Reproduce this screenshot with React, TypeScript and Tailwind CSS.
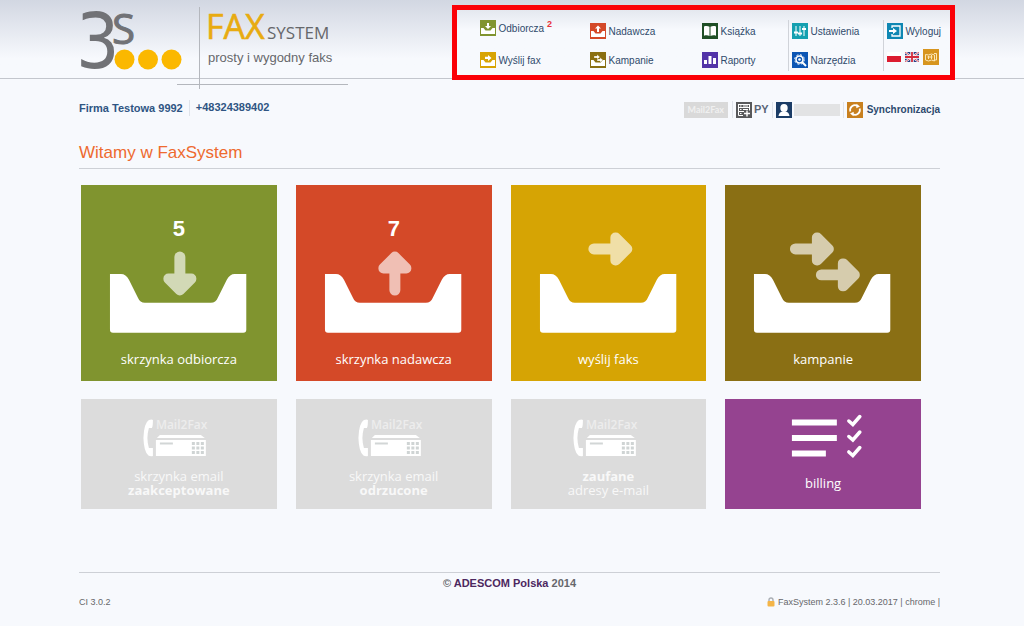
import type { ReactNode } from 'react';

type IconProps = { color: string; children: ReactNode };

// 16x16 coloured square with a white glyph on it
const Icon = ({ color, children }: IconProps) => (
  <svg viewBox="0 0 16 16" className="size-4 shrink-0" fill="#fff" aria-hidden="true">
    <rect width="16" height="16" fill={color} />
    {children}
  </svg>
);

const SMALL_TRAY = 'M1 8h2.5l2 2.5h5l2-2.5H15v6H1z';

const icons = {
  inbox: (
    <Icon color="#80942f">
      <path d={SMALL_TRAY} />
      <path d="M7 3h2v3h2L8 9 5 6h2z" />
    </Icon>
  ),
  outbox: (
    <Icon color="#d44928">
      <path d={SMALL_TRAY} />
      <path d="M8 2.500l3 3H9V9H7V5.500H5z" />
    </Icon>
  ),
  send: (
    <Icon color="#d8a403">
      <path d={SMALL_TRAY} />
      <path d="M5 4.800h3V3l3.500 3L8 9V7H5z" />
    </Icon>
  ),
  campaigns: (
    <Icon color="#8a6f12">
      <path d={SMALL_TRAY} />
      <path d="M4 4h3V2.500L10 5 7 7.500V6H4zM7 7h3V5.500L13 8l-3 2.500V9H7z" stroke="#8a6f12" strokeWidth=".3" />
    </Icon>
  ),
  book: (
    <Icon color="#1f4f26">
      <path d="M2 3.500c2-.8 4-.6 5.500.3v9.200c-1.500-.9-3.500-1-5.500-.3zM14 3.500c-2-.8-4-.6-5.500.3v9.200c1.500-.9 3.500-1 5.500-.3z" />
    </Icon>
  ),
  reports: (
    <Icon color="#5233a8">
      <rect x="2" y="8" width="3" height="4" />
      <rect x="6.500" y="4" width="3" height="8" />
      <rect x="11" y="6" width="3" height="6" />
    </Icon>
  ),
  settings: (
    <Icon color="#15a0b0">
      <path d="M3.500 3h1v10h-1zM7.500 3h1v10h-1zM11.500 3h1v10h-1z" />
      <path d="M2 8.500h4v2H2zM6 9.500h4v2H6zM10 5h4v2h-4z" />
    </Icon>
  ),
  tools: (
    <Icon color="#0c55b4">
      <g fill="none" stroke="#fff">
        <circle cx="7.500" cy="7.500" r="3.500" strokeWidth="1.600" />
        <circle cx="7.500" cy="7.500" r="4.800" strokeWidth="1" strokeDasharray="2 1.770" />
        <path d="M10 10l4 4" strokeWidth="2" />
      </g>
      <circle cx="7.500" cy="7.500" r="1.300" />
    </Icon>
  ),
  logout: (
    <Icon color="#0f87b3">
      <path d="M5 5V3h8v10H5v-2" fill="none" stroke="#fff" strokeWidth="1.300" />
      <path d="M2 7h4V5l4 3-4 3V9H2z" />
    </Icon>
  ),
  language: (
    <Icon color="#d7951f">
      <path
        d="M2.500 5.500l3 .5 3-1 3 1V12l-3-1-3 1-3-1zM11 4.500h2.500v6.500H11M5.500 7v3M8.500 6v4M4.500 8h5"
        fill="none"
        stroke="#fbe6b5"
      />
    </Icon>
  ),
  server: (
    <Icon color="#58595b">
      <g fill="none" stroke="#fff">
        <rect x="2.500" y="2.500" width="11" height="3" />
        <path d="M8 9.500H2.500v-4h11v3M7 13.500H2.500v-4M4 4h1.500M4 7.500h1.500M4 11.500h1.500M7 4h5M7 7.500h5" />
        <path d="M8 11.500h6M11 8.500v6" strokeWidth="1.400" />
      </g>
    </Icon>
  ),
  user: (
    <Icon color="#1c3d66">
      <ellipse cx="8" cy="6" rx="3.700" ry="4" />
      <path d="M2.500 14c.3-2.700 2-4 4-4.400h3c2 .4 3.700 1.700 4 4.400z" />
    </Icon>
  ),
  sync: (
    <Icon color="#c8801f">
      <g fill="none" stroke="#fff" strokeWidth="1.700">
        <path d="M3.300 9.500A4.900 4.900 0 0 1 10.500 3.900" />
        <path d="M12.700 6.500A4.900 4.900 0 0 1 5.500 12.100" />
      </g>
      <path d="M9.500 1.800l3.500 2.700-3.700 1.800zM6.500 14.200L3 11.500l3.700-1.800z" />
    </Icon>
  ),
};

const NavLink = ({ icon, label, count }: { icon: ReactNode; label: string; count?: number }) => (
  <a href="#" className="flex h-4 items-center gap-[3px] whitespace-nowrap">
    {icon}
    <span>{label}</span>
    {count !== undefined && <sup className="top-[-4px] text-[9px] font-bold text-[#e8323a]">{count}</sup>}
  </a>
);

const Logo = () => (
  <svg
    viewBox="0 0 270 90"
    className="-mb-3 h-[90px] w-[270px] shrink-0 overflow-visible"
    role="img"
    aria-label="3S FaxSystem"
  >
    <text x="-3" y="68" fontSize="76" fontFamily="'DejaVu Sans Condensed', 'DejaVu Sans', sans-serif" fill="#717276">
      3
    </text>
    <g fontFamily="'Open Sans', 'Noto Sans', sans-serif">
      <text x="33" y="44" fontSize="42" fill="#717276" stroke="#717276">S</text>
      <text x="127" y="39" fontSize="34" fill="#e8ab10" stroke="#e8ab10" strokeWidth=".6">FAX</text>
      <text x="188" y="39" fontSize="17" fill="#66676b">SYSTEM</text>
    </g>
    <g fill="#fbb800">
      <circle cx="45.500" cy="59.500" r="10" />
      <circle cx="69" cy="59.500" r="10" />
      <circle cx="92.500" cy="59.500" r="10" />
    </g>
    <text x="129" y="62" fontSize="13" fontFamily="'Liberation Sans', Arial, sans-serif" fill="#66676b">
      prosty i wygodny faks
    </text>
    <path d="M120.500 7v82M98 84.500h171" stroke="#b4b7bd" fill="none" />
  </svg>
);

const PolishFlag = () => (
  <svg viewBox="0 0 14 10" className="h-[10px] w-[14px]">
    <rect width="14" height="10" fill="#fff" />
    <rect y="4" width="14" height="6" fill="#dc1c30" />
  </svg>
);

const BritishFlag = () => (
  <svg viewBox="0 0 14 10" className="h-[10px] w-[14px]">
    <rect width="14" height="10" fill="#2b3f86" />
    <path d="M0 0l14 10M14 0L0 10" stroke="#fff" strokeWidth="2" />
    <path d="M0 0l14 10M14 0L0 10" stroke="#d22c3c" strokeWidth=".8" />
    <path d="M7 0v10M0 5h14" stroke="#fff" strokeWidth="3.400" />
    <path d="M7 0v10M0 5h14" stroke="#d22c3c" strokeWidth="1.800" />
  </svg>
);

// Points right, 44x33
const Arrow = ({ transform }: { transform: string }) => (
  <g transform={transform} fill="#fff" opacity=".65">
    <rect y="11" width="28" height="11" rx="5.500" />
    <path d="M27 5v23h.5L39 16.500 27.500 5z" stroke="#fff" strokeWidth="10" strokeLinejoin="round" />
  </g>
);

type TrayTileProps = { color: string; label: string; count?: number; arrows: string[] };

const TrayTile = ({ color, label, count, arrows }: TrayTileProps) => (
  <a href="#" className={`flex flex-col pb-3 ${color}`}>
    <svg viewBox="0 0 196 164" className="w-full" aria-hidden="true">
      {count !== undefined && (
        <text
          x="98"
          y="51"
          textAnchor="middle"
          fontSize="22"
          fontWeight="bold"
          fontFamily="'Liberation Sans', Arial, sans-serif"
          fill="#fff"
        >
          {count}
        </text>
      )}
      {arrows.map((transform) => (
        <Arrow key={transform} transform={transform} />
      ))}
      <path
        d="M29 89h11q5 0 8 6l9 18q2 5 7 5h66q5 0 7-5l9-18q3-6 8-6h11.500v56q0 3-3 3H32q-3 0-3-3z"
        fill="#fff"
      />
    </svg>
    <span className="text-center text-[13px]/5">{label}</span>
  </a>
);

const FaxTile = ({ children }: { children: ReactNode }) => (
  <a href="#" className="flex h-[110px] flex-col bg-[#dcdcdc] text-center text-[13px]/[14px] text-[#f8f8f8]">
    <svg viewBox="0 0 196 70" className="h-[70px] w-full" aria-hidden="true">
      <path d="M72 21q-1-1-4 0-5 3-5.500 18 .5 14 5 17.500 2 1 4.500.5v-8h-4q-3-10 0-20h3q1-1 1-8z" fill="#fff" />
      <text x="75" y="30" fontSize="12" fontWeight="600" fontFamily="'Open Sans', sans-serif" fill="#ededed">
        Mail2Fax
      </text>
      <path d="M79 36h41l4 3H76zM75 41h50v16H75z" fill="#fff" />
      <path d="M79 44.500h13" stroke="#d2d6d6" strokeWidth="2" />
      <path
        d="M111 44.500h12M111 49h12M111 53.500h12"
        stroke="#cfd4d4"
        strokeWidth="3"
        strokeDasharray="3 1.500"
      />
    </svg>
    {children}
  </a>
);

const BillingTile = () => (
  <a href="#" className="flex h-[110px] flex-col gap-1 bg-[#954390] text-center text-[13px]/5">
    <svg viewBox="0 0 196 70" className="h-[70px] w-full" aria-hidden="true">
      <path d="M67 20.500h45v6H67zM67 36h45v6H67zM67 51.500h34v6H67z" fill="#fff" />
      <path
        d="M124 22l4 3.500 7-8M124 37.500l4 3.500 7-8M124 53l4 3.500 7-8"
        fill="none"
        stroke="#fff"
        strokeWidth="3.500"
        strokeLinecap="round"
      />
    </svg>
    billing
  </a>
);

export default function App() {
  return (
    <div className="min-h-screen bg-[#f7f9fd] font-['Liberation_Sans',Arial,sans-serif] text-[#66676b]">
      <header className="flex h-[79px] justify-between border-b border-[#c3c6cd] bg-linear-to-b from-[#d2d7e2] to-[#f7f9fd] to-75% pr-[69px] pl-[79px]">
        <Logo />
        <nav className="mt-[5px] flex h-[75px] border-5 border-[#fb0007] bg-linear-to-b from-[#e4e8ef] to-[#f7f9fd] to-30% pt-[10px] pr-[9px] pl-[23px] text-[10px] text-[#2f4a6b]">
          <div className="flex w-[110px] flex-col gap-4">
            <NavLink icon={icons.inbox} label="Odbiorcza" count={2} />
            <NavLink icon={icons.send} label="Wyślij fax" />
          </div>
          <div className="flex w-28 flex-col gap-[13px] pt-[3px]">
            <NavLink icon={icons.outbox} label="Nadawcza" />
            <NavLink icon={icons.campaigns} label="Kampanie" />
          </div>
          <div className="flex w-[86px] flex-col gap-[13px] pt-[3px]">
            <NavLink icon={icons.book} label="Książka" />
            <NavLink icon={icons.reports} label="Raporty" />
          </div>
          <div className="mb-1 flex w-[95px] flex-col gap-[13px] border-l border-[#d0d3d9] pt-[3px] pl-[3px]">
            <NavLink icon={icons.settings} label="Ustawienia" />
            <NavLink icon={icons.tools} label="Narzędzia" />
          </div>
          <div className="mb-1 flex flex-col gap-[10px] border-l border-[#d0d3d9] pt-[3px] pl-[3px]">
            <NavLink icon={icons.logout} label="Wyloguj" />
            <div className="flex items-center gap-1">
              <a href="#" aria-label="Polski">
                <PolishFlag />
              </a>
              <a href="#" aria-label="English">
                <BritishFlag />
              </a>
              <a href="#" aria-label="Język">
                {icons.language}
              </a>
            </div>
          </div>
        </nav>
      </header>

      <div className="pr-[84px] pl-[79px]">
        <div className="flex h-[61px] items-center justify-between font-bold text-[#2f5583]">
          <div className="mb-1 flex items-center text-[11px]">
            <span className="border-r border-[#dfe3ea] pr-[6px] leading-4">Firma Testowa 9992</span>
            <span className="pl-[6px]">+48324389402</span>
          </div>
          <div className="flex items-center text-[10px] text-[#2c4a6e]">
            <a href="#" className="mr-1 bg-[#d9d9d9] px-1 font-['Lato',sans-serif] text-[9px]/4 text-[#f0f0f0]">
              Mail2Fax
            </a>
            <a href="#" className="flex items-center gap-[2px] border-l border-[#dfe3ea] px-[3px] text-[#5a6577]">
              {icons.server}
              <span className="text-[11px]">PY</span>
            </a>
            <a href="#" aria-label="Konto" className="flex items-center gap-[2px] border-l border-[#dfe3ea] px-[3px]">
              {icons.user}
              <span className="h-3 w-[46px] bg-[#e2e3e4]" />
            </a>
            <a href="#" className="flex items-center gap-1 border-l border-[#dfe3ea] pl-[3px]">
              {icons.sync}
              Synchronizacja
            </a>
          </div>
        </div>

        <h1 className="border-b border-[#cdd0d6] pb-[3px] text-[17px]/[25px] text-[#ee6a2f]">Witamy w FaxSystem</h1>

        <main className="mt-4 mr-[19px] ml-[2px] grid grid-cols-4 gap-x-[19px] gap-y-[18px] font-['Open_Sans','Noto_Sans',sans-serif] text-white">
          <TrayTile
            color="bg-[#80942f]"
            label="skrzynka odbiorcza"
            count={5}
            arrows={['translate(115.500 66.700) rotate(90)']}
          />
          <TrayTile
            color="bg-[#d44928]"
            label="skrzynka nadawcza"
            count={7}
            arrows={['translate(82.500 110.700) rotate(-90)']}
          />
          <TrayTile color="bg-[#d6a404]" label="wyślij faks" arrows={['translate(77.500 47.500)']} />
          <TrayTile
            color="bg-[#8a6f14]"
            label="kampanie"
            arrows={['translate(65 47.500)', 'translate(91 73.500)']}
          />
          <FaxTile>
            <span>skrzynka email</span>
            <b>zaakceptowane</b>
          </FaxTile>
          <FaxTile>
            <span>skrzynka email</span>
            <b>odrzucone</b>
          </FaxTile>
          <FaxTile>
            <b>zaufane</b>
            <span>adresy e-mail</span>
          </FaxTile>
          <BillingTile />
        </main>

        <footer className="mt-[63px] border-t border-[#cdd0d6] pt-[3px]">
          <p className="text-center text-[11px]/[14px] font-bold">
            © <a href="#" className="text-[#4c2760]">ADESCOM Polska</a> 2014
          </p>
          <div className="mt-1 flex items-center justify-between text-[9px]/4">
            <span>CI 3.0.2</span>
            <span className="flex items-center gap-[3px]">
              <svg viewBox="0 0 8 10" className="h-[10px] w-2" aria-hidden="true">
                <path d="M2 5V3q0-2 2-2t2 2v2" fill="none" stroke="#a9adb3" strokeWidth="1.400" />
                <rect x=".5" y="4" width="7" height="5.500" rx="1" fill="#f4b548" />
              </svg>
              FaxSystem 2.3.6 | 20.03.2017 | chrome |
            </span>
          </div>
        </footer>
      </div>
    </div>
  );
}
